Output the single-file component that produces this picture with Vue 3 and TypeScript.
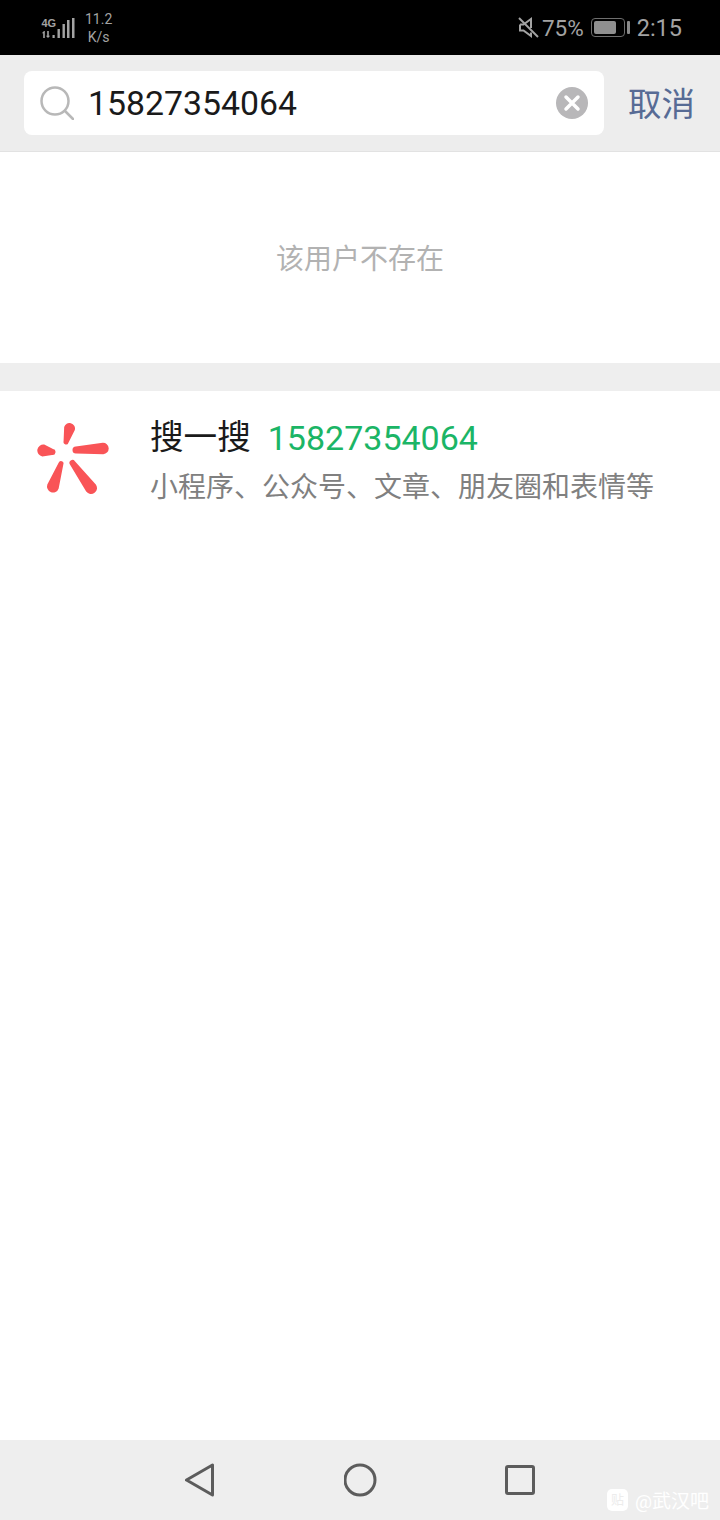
<template>
  <div class="page">
    <div class="status">
      <div class="status-left">
        <svg class="signal" width="34" height="22" viewBox="0 0 34 22">
          <text x="0.500" y="10" class="net">4G</text>
          <g fill="#a3a3a3">
            <path d="M3 14l-2.200 2.200h1.400V21h1.600v-7z" />
            <path d="M6.200 14v4.800H4.800L7 21l2.200-2.200H7.800V14z" />
            <rect x="11.500" y="18" width="2.200" height="3" />
            <rect x="16.500" y="12" width="2.400" height="9" />
            <rect x="21.500" y="7" width="2.400" height="14" />
            <rect x="26" y="3" width="2.500" height="18" />
            <rect x="31" y="1" width="2.500" height="20" />
          </g>
        </svg>
        <div class="speed">
          <span>11.2</span>
          <span>K/s</span>
        </div>
      </div>
      <div class="status-right">
        <svg class="mute" width="21" height="21" viewBox="0 0 21 21" fill="none" stroke="#a3a3a3" stroke-width="2">
          <path d="M2 7.500h3.500L13 2v9M2 7.500v6h3.500l7.500 5.500v-3.500" />
          <path d="M1 1l19 19" />
        </svg>
        <span class="pct">75%</span>
        <div class="battery">
          <div class="battery-body"><div class="battery-fill" :style="{ width: level + '%' }"></div></div>
          <div class="battery-cap"></div>
        </div>
        <span class="clock">2:15</span>
      </div>
    </div>

    <div class="search-bar">
      <div class="search-box">
        <svg class="search-icon" width="34" height="34" viewBox="0 0 34 34" fill="none" stroke="#b8b8b8" stroke-width="2.500">
          <circle cx="15" cy="15" r="13.500" />
          <path d="M25 25l8 8" stroke-linecap="round" />
        </svg>
        <span class="query">{{ query }}</span>
        <svg class="clear" width="32" height="32" viewBox="0 0 32 32">
          <circle cx="16" cy="16" r="16" fill="#b8b7b9" />
          <path d="M10 10l12 12M22 10L10 22" stroke="#fff" stroke-width="3.500" stroke-linecap="round" />
        </svg>
      </div>
      <span class="cancel">取消</span>
    </div>

    <div class="no-user">该用户不存在</div>
    <div class="divider"></div>

    <div class="result">
      <svg class="logo" width="72" height="72" viewBox="0 0 72 72" fill="#f95457">
        <path v-for="(p, i) in petals" :key="i" :d="petalPath(p)" />
      </svg>
      <div class="result-text">
        <div class="title"><span>搜一搜</span><span class="hit">{{ query }}</span></div>
        <div class="sub">小程序、公众号、文章、朋友圈和表情等</div>
      </div>
    </div>

    <div class="spacer"></div>

    <div class="nav">
      <svg width="32" height="34" viewBox="0 0 32 34" fill="none" stroke="#5c5c5c" stroke-width="3" stroke-linejoin="round">
        <path d="M28.500 2v30L2.500 17z" />
      </svg>
      <svg width="33" height="34" viewBox="0 0 33 34" fill="none" stroke="#5c5c5c" stroke-width="3">
        <circle cx="16" cy="17" r="15" />
      </svg>
      <svg width="30" height="30" viewBox="0 0 30 30" fill="none" stroke="#5c5c5c" stroke-width="3" stroke-linejoin="round">
        <rect x="1.500" y="1.500" width="27" height="27" rx="1.500" />
      </svg>
      <div class="mark">
        <div class="mark-icon">贴</div>
        <span>@武汉吧</span>
      </div>
    </div>
  </div>
</template>

<script setup lang="ts">
const query = '15827354064'
const level = 78

// each petal is a tapered capsule: round end -> tip
const petals = [
  [32.5, 5.5, 5.5, 29, 19, 2.5],
  [66, 25.5, 5.7, 39, 27, 3.5],
  [6.3, 27.5, 6, 15.5, 29, 3],
  [16, 63.5, 6, 24, 40.5, 2.5],
  [54, 65, 6, 35.5, 40, 3],
]

function petalPath([x1, y1, r1, x2, y2, r2]: number[]) {
  const len = Math.hypot(x2 - x1, y2 - y1)
  const nx = -(y2 - y1) / len
  const ny = (x2 - x1) / len
  return `M${x1 + nx * r1} ${y1 + ny * r1}A${r1} ${r1} 0 0 1 ${x1 - nx * r1} ${y1 - ny * r1}L${x2 - nx * r2} ${y2 - ny * r2}A${r2} ${r2} 0 0 1 ${x2 + nx * r2} ${y2 + ny * r2}Z`
}
</script>

<style>
body {
  background: #fff;
}
</style>

<style scoped>
.page {
  width: 720px;
  height: 1520px;
  display: flex;
  flex-direction: column;
  background: #fff;
  font-family: Roboto, "Noto Sans CJK SC", sans-serif;
  overflow: hidden;
}

.status {
  height: 55px;
  flex: none;
  background: #000;
  color: #a3a3a3;
  display: flex;
  align-items: center;
  justify-content: space-between;
  padding: 0 38px 0 41px;
}

.status-left {
  display: flex;
  align-items: center;
  gap: 10px;
}

.net {
  font-size: 11px;
  font-weight: 700;
  fill: #a3a3a3;
  font-family: "Liberation Sans", sans-serif;
}

.speed {
  display: flex;
  flex-direction: column;
  align-items: center;
  font-size: 14px;
  line-height: 18px;
}

.status-right {
  display: flex;
  align-items: center;
}

.pct {
  font-size: 22.5px;
  margin-left: 3px;
}

.battery {
  display: flex;
  align-items: center;
  margin-left: 7px;
  margin-right: 7px;
}

.battery-body {
  width: 34px;
  height: 19px;
  border: 1px solid #6e6e6e;
  border-radius: 4px;
  padding: 2px;
  box-sizing: border-box;
}

.battery-fill {
  height: 100%;
  background: #8f8f8f;
  border-radius: 2px;
}

.battery-cap {
  width: 3px;
  height: 13px;
  margin-left: 2px;
  background: #8a8a8a;
  border-radius: 1px;
}

.clock {
  font-size: 23.5px;
}

.search-bar {
  height: 97px;
  flex: none;
  box-sizing: border-box;
  background: #ededed;
  border-bottom: 1px solid #e2e2e2;
  display: flex;
  align-items: flex-start;
  padding: 16px 25px 0 24px;
}

.search-box {
  width: 580px;
  height: 64px;
  background: #fff;
  border-radius: 8px;
  display: flex;
  align-items: center;
  padding: 0 16px 0 16px;
  box-sizing: border-box;
}

.search-icon {
  flex: none;
}

.query {
  margin-left: 14px;
  flex: 1;
  font-size: 33.8px;
  color: #1a1a1a;
}

.clear {
  flex: none;
}

.cancel {
  margin-left: auto;
  font-size: 33.5px;
  line-height: 68px;
  color: #576b95;
}

.no-user {
  height: 211px;
  flex: none;
  box-sizing: border-box;
  padding-bottom: 2px;
  display: flex;
  align-items: center;
  justify-content: center;
  font-size: 28px;
  color: #b2b2b2;
}

.divider {
  height: 28px;
  flex: none;
  background: #eeeeee;
}

.result {
  display: flex;
  align-items: flex-start;
  padding: 32px 0 0 37px;
  flex: none;
}

.logo {
  flex: none;
}

.result-text {
  margin-left: 41px;
  margin-top: -5px;
}

.title {
  display: flex;
  gap: 17px;
  font-size: 33.600px;
  line-height: 40px;
  color: #1a1a1a;
}

.hit {
  font-size: 34px;
  color: #1bb566;
}

.sub {
  margin-top: 10px;
  font-size: 28px;
  line-height: 40px;
  color: #808080;
}

.spacer {
  flex: 1;
}

.nav {
  height: 80px;
  flex: none;
  background: #eeeeee;
  position: relative;
  display: flex;
  align-items: center;
  padding-left: 184px;
  gap: 128px;
}

.mark {
  position: absolute;
  right: 11px;
  bottom: 7px;
  display: flex;
  align-items: center;
  gap: 7px;
  font-size: 19px;
  color: #fff;
}

.mark-icon {
  width: 21px;
  height: 22px;
  border-radius: 5px;
  background: #fff;
  color: #ececec;
  font-size: 13px;
  line-height: 21px;
  text-align: center;
}
</style>
